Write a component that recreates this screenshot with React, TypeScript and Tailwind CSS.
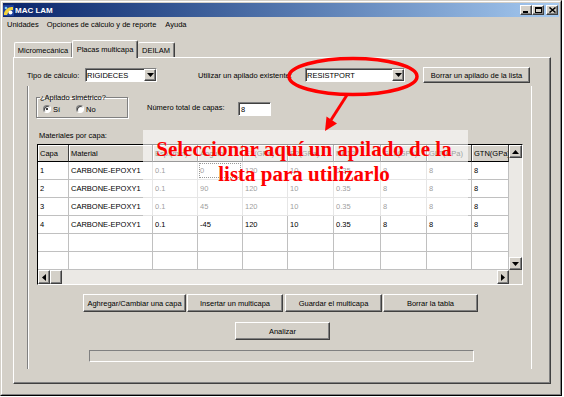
import React from "react";

const raised =
  "border border-t-white border-l-white border-r-[#404040] border-b-[#404040] shadow-[inset_-1px_-1px_0_#808080] bg-[#d4d0c8]";
const sunken =
  "border border-t-[#808080] border-l-[#808080] border-r-white border-b-white shadow-[inset_1px_1px_0_#404040]";

function Arrow({ dir }: { dir: "up" | "down" | "left" | "right" }) {
  const p =
    dir === "down"
      ? "M0 0H7L3.5 4Z"
      : dir === "up"
      ? "M0 4H7L3.5 0Z"
      : dir === "left"
      ? "M4 0V7L0 3.5Z"
      : "M0 0V7L4 3.5Z";
  const w = dir === "up" || dir === "down" ? 7 : 4;
  const h = dir === "up" || dir === "down" ? 4 : 7;
  return (
    <svg width={w} height={h} viewBox={`0 0 ${w} ${h}`}>
      <path d={p} fill="#000" />
    </svg>
  );
}

function Select({ className, value }: { className: string; value: string }) {
  return (
    <div className={`flex h-[14px] bg-white ${sunken} ${className}`}>
      <div className="flex-1 flex items-center pl-[1px] overflow-hidden whitespace-nowrap">{value}</div>
      <div className={`w-[12px] flex items-center justify-center ${raised}`}>
        <Arrow dir="down" />
      </div>
    </div>
  );
}

function Btn({ className, children }: { className: string; children: React.ReactNode }) {
  return (
    <div className={`flex items-center justify-center whitespace-nowrap ${raised} ${className}`}>{children}</div>
  );
}

function Radio({ checked }: { checked?: boolean }) {
  return (
    <span
      className={`w-[8px] h-[8px] rounded-full bg-white flex items-center justify-center border border-t-[#808080] border-l-[#808080] border-r-white border-b-white shadow-[inset_1px_1px_0_#404040]`}
    >
      {checked ? <span className="w-[2px] h-[2px] rounded-full bg-black" /> : null}
    </span>
  );
}

const headers = [
  "Capa",
  "Material",
  "Esp.(mm)",
  "Ángulo",
  "E1(GPa)",
  "E2(GPa)",
  "NU12",
  "G12(GPa)",
  "GLT(GPa)",
  "GTN(GPa)",
];

const rows: string[][] = [
  ["1", "CARBONE-EPOXY1", "0.1", "0", "120", "10", "0.35", "8", "8", "8"],
  ["2", "CARBONE-EPOXY1", "0.1", "90", "120", "10", "0.35", "8", "8", "8"],
  ["3", "CARBONE-EPOXY1", "0.1", "45", "120", "10", "0.35", "8", "8", "8"],
  ["4", "CARBONE-EPOXY1", "0.1", "-45", "120", "10", "0.35", "8", "8", "8"],
  ["", "", "", "", "", "", "", "", "", ""],
  ["", "", "", "", "", "", "", "", "", ""],
];

function Grid() {
  return (
    <div className="ml-[9px] mt-[4px] w-[486px] h-[141px] border border-t-black border-l-black border-r-white border-b-white bg-white flex flex-col">
      <div className="flex h-[125px]">
        <div className="w-[471px] overflow-hidden">
          <div className="grid grid-cols-[31px_84px_45px_45px_45px_46px_47px_46px_45px_37px] grid-rows-[17px_repeat(6,18px)]">
            {headers.map((h, i) => (
              <div
                key={"h" + i}
                className="bg-[#d4d0c8] border-r border-b border-r-[#404040] border-b-black shadow-[inset_1px_1px_0_white] flex items-center pl-[2px] overflow-hidden whitespace-nowrap"
              >
                {h}
              </div>
            ))}
            {rows.map((r, ri) =>
              r.map((c, ci) => (
                <div
                  key={ri + "-" + ci}
                  className="relative border-r border-b border-r-[#c0c0c0] border-b-[#c0c0c0] flex items-center pl-[2px] overflow-hidden whitespace-nowrap"
                >
                  {c}
                  {ri === 0 && ci === 3 ? (
                    <span className="absolute inset-[1px] border border-dotted border-black" />
                  ) : null}
                </div>
              ))
            )}
          </div>
        </div>
        <div className="w-[13px] flex flex-col">
          <div className={`h-[13px] flex items-center justify-center ${raised}`}>
            <Arrow dir="up" />
          </div>
          <div className="flex-1 bg-[#ebe9e5]" />
          <div className={`h-[13px] flex items-center justify-center ${raised}`}>
            <Arrow dir="down" />
          </div>
        </div>
      </div>
      <div className="flex h-[14px]">
        <div className="w-[471px] flex">
          <div className={`w-[12px] flex items-center justify-center ${raised}`}>
            <Arrow dir="left" />
          </div>
          <div className={`w-[12px] ${raised}`} />
          <div className="flex-1 bg-[#ebe9e5]" />
          <div className={`w-[12px] flex items-center justify-center ${raised}`}>
            <Arrow dir="right" />
          </div>
        </div>
        <div className="w-[13px] bg-[#d4d0c8]" />
      </div>
    </div>
  );
}

function AppIcon() {
  return (
    <svg width="11" height="11" viewBox="0 0 11 11">
      <rect x="0" y="0" width="11" height="11" rx="1" fill="#1c3f9c" />
      <path d="M1 8 C3 3 6 2 10 2 L10 5 C7 5 5 7 4 10 L1 10Z" fill="#f2d23c" />
      <circle cx="7.5" cy="7.5" r="2" fill="#ffffff" />
      <circle cx="3" cy="3" r="1.3" fill="#7fd0f0" />
    </svg>
  );
}

function CapBtn({ kind }: { kind: "min" | "max" | "close" }) {
  return (
    <div className={`w-[12px] h-[10px] flex items-center justify-center ${raised}`}>
      {kind === "min" && (
        <svg width="6" height="6" viewBox="0 0 6 6">
          <rect x="0" y="4" width="5" height="2" fill="#000" />
        </svg>
      )}
      {kind === "max" && (
        <svg width="7" height="6" viewBox="0 0 7 6">
          <rect x="0.5" y="0.5" width="6" height="5" fill="none" stroke="#000" />
          <rect x="0" y="0" width="7" height="2" fill="#000" />
        </svg>
      )}
      {kind === "close" && (
        <svg width="7" height="6" viewBox="0 0 7 6">
          <path d="M0.5 0.5L6.5 5.5M6.5 0.5L0.5 5.5" stroke="#000" strokeWidth="1.5" />
        </svg>
      )}
    </div>
  );
}

export default function App() {
  return (
    <div className="w-[564px] h-[397px] bg-white relative overflow-hidden font-['Liberation_Sans',Arial,sans-serif] text-[7.5px] leading-[9px] text-black">
      <div className="w-[562px] h-[396px] border border-t-[#d4d0c8] border-l-[#d4d0c8] border-r-black border-b-black">
        <div className="h-full border border-t-white border-l-white border-r-[#808080] border-b-[#808080] bg-[#d4d0c8] p-px flex flex-col">
          {/* Title bar */}
          <div className="h-[14px] flex items-center bg-linear-to-r from-[#0a246a] to-[#a6caf0] pr-[1px]">
            <AppIcon />
            <span className="ml-[1px] text-white font-bold text-[8px]">MAC LAM</span>
            <div className="ml-auto flex items-center">
              <CapBtn kind="min" />
              <CapBtn kind="max" />
              <div className="ml-[2px]">
                <CapBtn kind="close" />
              </div>
            </div>
          </div>
          {/* Menu */}
          <div className="h-[14px] flex items-center gap-[8px] pl-[4px]">
            <span>Unidades</span>
            <span>Opciones de cálculo y de reporte</span>
            <span className="ml-[1px]">Ayuda</span>
          </div>
          {/* Body */}
          <div className="pl-[10px] pr-[8px] pt-[9px] flex flex-col">
            <div className="flex items-end h-[17px]">
              <div className="ml-[1px] w-[58px] h-[15px] flex items-center justify-center border-t border-l border-r border-t-white border-l-white border-r-[#808080] rounded-t-[2px]">
                Micromecánica
              </div>
              <div className="relative z-10 w-[66px] h-[18px] -mb-px flex items-center justify-center bg-[#d4d0c8] border-t border-l border-r border-t-white border-l-white border-r-[#404040] rounded-t-[2px] shadow-[inset_-1px_0_0_#808080]">
                Placas multicapa
              </div>
              <div className="w-[37px] h-[15px] flex items-center justify-center border-t border-r border-t-white border-r-[#404040] rounded-t-[2px] shadow-[inset_-1px_0_0_#808080]">
                DEILAM
              </div>
            </div>
            <div className="h-[327px] border border-t-white border-l-white border-r-[#404040] border-b-[#404040] shadow-[inset_-1px_-1px_0_#808080] flex flex-col">
              {/* Row 1 */}
              <div className="flex items-center h-[16px] mt-[9px] pl-[13px]">
                <span className="w-[58px]">Tipo de cálculo:</span>
                <Select className="w-[72px]" value="RIGIDECES" />
                <span className="ml-[41px] w-[107px] whitespace-nowrap">Utilizar un apilado existente:</span>
                <Select className="w-[100px]" value="RESISTPORT" />
                <Btn className="ml-[18px] w-[107px] h-[16px]">Borrar un apilado de la lista</Btn>
              </div>
              {/* Group */}
              <div className="ml-[13px] mt-[3px] w-[505px] h-[283px] border-l border-r border-l-[#808080] border-r-white shadow-[inset_1px_0_0_white] flex flex-col">
                <div className="flex items-start pt-[7px]">
                  <fieldset className="ml-[8px] w-[92px] h-[25px] border border-[#808080] shadow-[1px_1px_0_white,inset_1px_1px_0_white] px-[3px]">
                    <legend className="px-0 leading-[9px]">¿Apilado simétrico?</legend>
                    <div className="flex items-center h-[12px] mt-[1px]">
                      <span className="ml-[3px]">
                        <Radio checked />
                      </span>
                      <span className="ml-[2px]">Sí</span>
                      <span className="ml-[16px]">
                        <Radio />
                      </span>
                      <span className="ml-[2px]">No</span>
                    </div>
                  </fieldset>
                  <span className="ml-[19px] mt-[10px] w-[91px] whitespace-nowrap">Número total de capas:</span>
                  <div className={`mt-[9px] w-[33px] h-[14px] bg-white flex items-center pl-[2px] ${sunken}`}>8</div>
                </div>
                <div className="mt-[13px] ml-[11px]">Materiales por capa:</div>
                <Grid />
                <div className="mt-[9px] ml-[55px] flex h-[18px]">
                  <Btn className="w-[103px] h-[18px]">Aghregar/Cambiar una capa</Btn>
                  <Btn className="ml-[1px] w-[96px] h-[18px]">Insertar un multicapa</Btn>
                  <Btn className="ml-[2px] w-[97px] h-[18px]">Guardar el multicapa</Btn>
                  <Btn className="ml-[1px] w-[95px] h-[18px]">Borrar la tabla</Btn>
                </div>
                <Btn className="mt-[10px] ml-[207px] w-[95px] h-[18px]">Analizar</Btn>
                <div className="mt-[10px] ml-[61px] w-[385px] h-[12px] border border-t-[#808080] border-l-[#808080] border-r-white border-b-white" />
              </div>
            </div>
          </div>
        </div>
      </div>

      {/* Annotation overlay */}
      <div className="absolute left-[143px] top-[130px] w-[325px] h-[86px] bg-white/60 pointer-events-none" />
      <div className="absolute left-[142px] top-[137px] w-[324px] text-center font-['Liberation_Serif','Times_New_Roman',serif] font-bold text-[21px] leading-[25px] text-[#ff0000] pointer-events-none">
        Seleccionar aquí un apilado de la
        <br />
        lista para utilizarlo
      </div>
      <svg className="absolute left-0 top-0 pointer-events-none" width="564" height="397" viewBox="0 0 564 397">
        <ellipse cx="353" cy="76.5" rx="64" ry="18" fill="none" stroke="#ff0000" strokeWidth="3.5" />
        <line x1="347" y1="95" x2="331" y2="120" stroke="#ff0000" strokeWidth="3" />
        <polygon points="325,131 337,123.5 326.5,116.5" fill="#ff0000" />
      </svg>
    </div>
  );
}
